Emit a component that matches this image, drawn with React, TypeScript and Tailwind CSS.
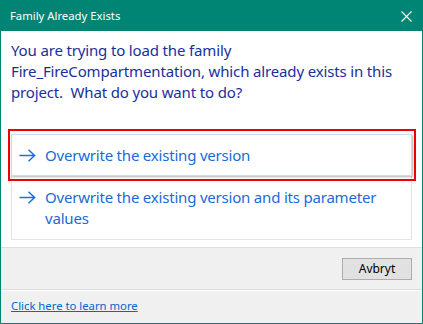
import React from "react";

function Arrow() {
  return (
    <svg width="17" height="13" viewBox="0 0 17 13" className="shrink-0">
      <path d="M0.5 6.5H15.5M9.5 0.8L15.6 6.5L9.5 12.2" fill="none" stroke="#1f6fd6" strokeWidth="1.5" />
    </svg>
  );
}

export default function App() {
  return (
    <div
      className="w-[423px] h-[324px] flex flex-col border border-[#008575] bg-white"
      style={{ fontFamily: '"Noto Sans", "Open Sans", sans-serif' }}
    >
      {/* title bar */}
      <div className="h-[30px] shrink-0 bg-[#008575] flex items-center justify-between pl-[9px] pr-[10px]">
        <span className="text-white text-[11.3px] leading-none">Family Already Exists</span>
        <svg width="11" height="11" viewBox="0 0 11 11">
          <path d="M0.5 0.5L10.5 10.5M10.5 0.5L0.5 10.5" stroke="white" strokeWidth="1.1" />
        </svg>
      </div>

      {/* content */}
      <div className="flex-1 px-[10px] pt-[9px]">
        <p className="text-[15px] leading-[21px] text-[#1a2f9c] tracking-[-0.15px]">
          You are trying to load the family Fire_FireCompartmentation, which already exists in this project.&nbsp; What do you want to do?
        </p>

        <div className="mt-[31px] border border-[#e4e4e4]">
          <div className="relative">
            <div className="h-[42px] flex items-center gap-[9px] pl-[7px] border border-[#c6dcf0] shadow-[1px_1px_2px_rgba(0,0,0,0.3)] -m-px">
              <Arrow />
              <span className="text-[15px] text-[#1a6ad6] tracking-[-0.2px]">Overwrite the existing version</span>
            </div>
            <div className="absolute -left-[4px] -right-[5px] -top-[5px] -bottom-[5px] border-2 border-[#ee0000] pointer-events-none" />
          </div>
          <div className="flex items-start gap-[9px] pl-[7px] pt-[16px] pb-[10px]">
            <Arrow />
            <span className="-mt-[4px] text-[15px] leading-[21px] text-[#1a6ad6] tracking-[-0.2px] pr-[30px]">
              Overwrite the existing version and its parameter values
            </span>
          </div>
        </div>
      </div>

      {/* footer */}
      <div className="shrink-0 bg-[#f0f0f0] border-t border-[#dfdfdf] h-[42px] flex items-start justify-end pt-[10px] pr-[10px]">
        <button className="w-[70px] h-[22px] border border-[#adadad] bg-[#e1e1e1] text-[12px] text-black leading-none">
          Avbryt
        </button>
      </div>
      <div className="shrink-0 bg-[#f0f0f0] border-t border-[#dcdcdc] shadow-[inset_0_1px_0_#ffffff] h-[34px] flex items-center pl-[10px] pb-[2px]">
        <a className="text-[11.3px] leading-none text-[#0066cc] underline">Click here to learn more</a>
      </div>
    </div>
  );
}
